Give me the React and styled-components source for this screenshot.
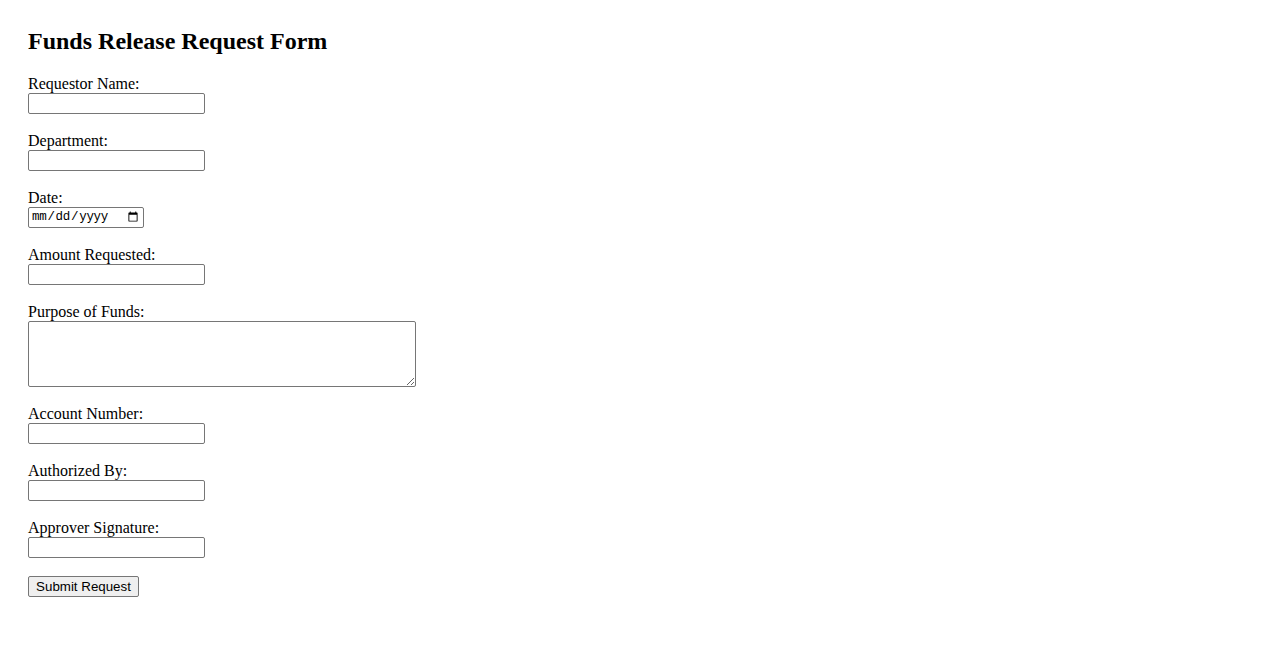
import React from 'react'
import styled, { createGlobalStyle } from 'styled-components'

const GlobalStyle = createGlobalStyle`
  body {
    margin: 0;
    background: #fff;
    color: #000;
    font-family: 'Liberation Serif', 'Times New Roman', serif;
  }
`

const fields = [
  { id: 'name', label: 'Requestor Name:', kind: 'text' },
  { id: 'dept', label: 'Department:', kind: 'text' },
  { id: 'date', label: 'Date:', kind: 'date' },
  { id: 'amount', label: 'Amount Requested:', kind: 'text' },
  { id: 'purpose', label: 'Purpose of Funds:', kind: 'area' },
  { id: 'account', label: 'Account Number:', kind: 'text' },
  { id: 'auth', label: 'Authorized By:', kind: 'text' },
  { id: 'sign', label: 'Approver Signature:', kind: 'text' },
]

const App = () => {
  return (
    <>
      <GlobalStyle />
      <Page>
        <Title>Funds Release Request Form</Title>
        <Form onSubmit={e => e.preventDefault()}>
          {fields.map(f => (
            <Field key={f.id}>
              <Label htmlFor={f.id}>{f.label}</Label>
              {f.kind === 'area' && <TextArea id={f.id} />}
              {f.kind === 'date' && <DateInput id={f.id} type="date" />}
              {f.kind === 'text' && <TextInput id={f.id} type="text" />}
            </Field>
          ))}
          <SubmitBtn type="submit">Submit Request</SubmitBtn>
        </Form>
      </Page>
    </>
  )
}

export default App

const Page = styled.div`
  padding: 28px 28px;
`

const Title = styled.h2`
  margin: 0 0 17px 0;
  font-size: 24px;
  font-weight: bold;
  line-height: 27.6px;
`

const Form = styled.form`
  display: flex;
  flex-direction: column;
  align-items: flex-start;
`

const Field = styled.div`
  display: flex;
  flex-direction: column;
  align-items: flex-start;
  margin-bottom: 16px;
`

const Label = styled.label`
  padding-top: 2px;
  font-size: 16px;
  line-height: 18px;
`

const control = `
  box-sizing: border-box;
  margin: 0;
  border: 1px solid #767676;
  border-radius: 2px;
  background: #fff;
  color: #000;
  font-size: 13.33px;
  padding: 1px 2px;
`

const TextInput = styled.input`
  ${control}
  width: 177px;
  height: 21px;
  font-family: 'Liberation Sans', Arial, sans-serif;
`

const DateInput = styled.input`
  ${control}
  width: 116px;
  height: 21px;
  font-family: 'Liberation Mono', 'DejaVu Sans Mono', monospace;
  font-size: 12.5px;
  letter-spacing: -0.3px;
`

const TextArea = styled.textarea`
  ${control}
  width: 388px;
  height: 66px;
  font-family: 'Liberation Mono', monospace;
  resize: vertical;
`

const SubmitBtn = styled.button`
  box-sizing: border-box;
  margin: 2px 0 0 0;
  height: 21px;
  width: 111px;
  padding: 1px 6px;
  border: 1px solid #767676;
  border-radius: 2px;
  background: #efefef;
  color: #000;
  font-family: 'Liberation Sans', Arial, sans-serif;
  font-size: 13.33px;
  cursor: pointer;
  &:hover {
    background: #e5e5e5;
  }
`
